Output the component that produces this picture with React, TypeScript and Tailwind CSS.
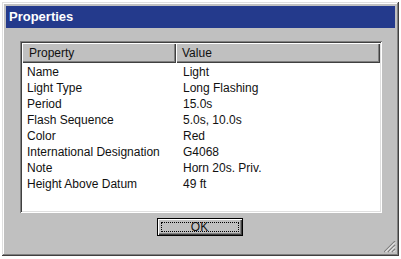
import React from "react";

const rows: [string, string][] = [
  ["Name", "Light"],
  ["Light Type", "Long Flashing"],
  ["Period", "15.0s"],
  ["Flash Sequence", "5.0s, 10.0s"],
  ["Color", "Red"],
  ["International Designation", "G4068"],
  ["Note", "Horn 20s. Priv."],
  ["Height Above Datum", "49 ft"],
];

const font = { fontFamily: '"Liberation Sans", Arial, sans-serif' };

function Grip() {
  return (
    <svg width="12" height="12" viewBox="0 0 12 12" className="absolute right-[3px] bottom-[3px]">
      <path d="M11 0L0 11M11 4L4 11M11 8L8 11" stroke="#808080" strokeWidth="1.2" />
      <path d="M11 1.5L1.5 11M11 5.5L5.5 11M11 9.5L9.5 11" stroke="#ffffff" strokeWidth="1" />
    </svg>
  );
}

export default function App() {
  return (
    <div className="w-[401px] h-[259px] bg-white pt-[2px] pl-[2px]" style={font}>
      <div className="relative w-[397px] h-[254px] bg-[#c0c0c0] p-[4px] flex flex-col shadow-[inset_-1px_-1px_#404040,inset_1px_1px_#dfdfdf,inset_-2px_-2px_#808080,inset_2px_2px_#ffffff]">
        <div className="h-[22px] bg-[#243a8c] flex items-center pl-[3px] text-white font-bold text-[13px]">
          Properties
        </div>

        <div className="flex flex-col pl-[14px] pr-[13px] pt-[13px]">
          <div className="h-[172px] bg-white p-[2px] shadow-[inset_1px_1px_#808080,inset_-1px_-1px_#ffffff,inset_2px_2px_#404040,inset_-2px_-2px_#dfdfdf] text-[12px] text-[#111]">
            <div className="flex h-[20px]">
              <div className="w-[154px] bg-[#c0c0c0] flex items-center pl-[7px] shadow-[inset_1px_1px_#ffffff,inset_-1px_-1px_#404040,inset_-2px_-2px_#808080]">
                Property
              </div>
              <div className="flex-1 bg-[#c0c0c0] flex items-center pl-[6px] shadow-[inset_1px_1px_#ffffff,inset_-1px_-1px_#404040,inset_-2px_-2px_#808080]">
                Value
              </div>
            </div>
            <div className="pt-[1px]">
              {rows.map(([k, v]) => (
                <div key={k} className="flex h-[16px] items-center">
                  <div className="w-[154px] pl-[5px] whitespace-nowrap">{k}</div>
                  <div className="pl-[7px] whitespace-nowrap">{v}</div>
                </div>
              ))}
            </div>
          </div>

          <div className="flex justify-center mt-[5px] pr-[3px]">
            <button className="w-[86px] h-[18px] border border-black bg-[#c0c0c0] p-[3px] shadow-[inset_1px_1px_#ffffff,inset_-1px_-1px_#404040,inset_-2px_-2px_#808080] text-[12px] text-[#111] leading-none">
              <div className="w-full h-full border border-dotted border-black flex items-center justify-center">
                OK
              </div>
            </button>
          </div>
        </div>

        <Grip />
      </div>
    </div>
  );
}
